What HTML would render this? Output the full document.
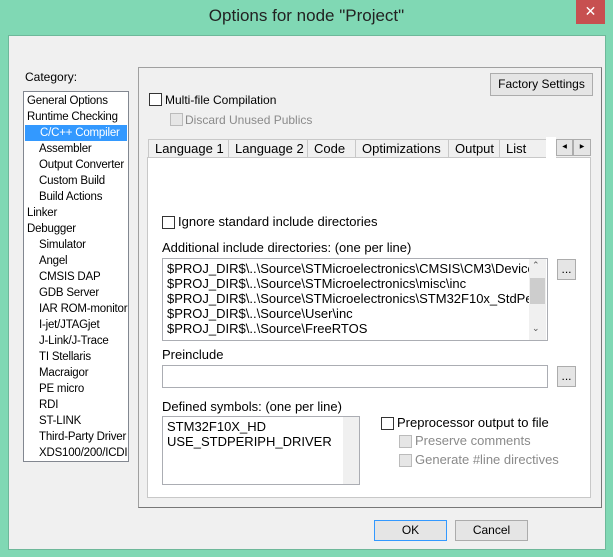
<!DOCTYPE html>
<html><head><meta charset="utf-8"><style>
*{margin:0;padding:0;box-sizing:border-box}
body{width:613px;height:557px;background:#80d8b4;position:relative;overflow:hidden;font-family:"Liberation Sans",sans-serif;font-size:12px;color:#000}
.a{position:absolute;white-space:nowrap}
.cb{position:absolute;width:13px;height:13px;border:1px solid #333;background:#fff}
.cb.d{border-color:#bbb;background:#e6e6e6}
.btn{position:absolute;background:#e5e5e5;border:1px solid #acacac;text-align:center}
.g{color:#8a8a8a}
.li{position:absolute;left:0;width:104px;height:16px;line-height:16px;padding-left:3px;white-space:nowrap;overflow:hidden;font-size:11.5px;letter-spacing:-0.2px}
.s{padding-left:15px}
.box{position:absolute;background:#fff;border:1px solid #abadb3}
.t{font-size:13px}
.tab{position:absolute;top:139px;height:19px;border:1px solid #c8c8c8;background:#f0f0f0;font-size:13px;line-height:18px;padding-left:6px;white-space:nowrap;overflow:hidden}
</style></head><body>
<div class="a" style="left:0;top:6px;width:613px;text-align:center;font-size:17px;color:#222">Options for node "Project"</div>
<div class="a" style="left:576px;top:0;width:29px;height:24px;background:#c75050;color:#fff;text-align:center;font-size:14px;line-height:22px">✕</div>
<div class="a" style="left:8px;top:35px;width:598px;height:515px;background:#f0f0f0;border:1px solid #6eb89a"></div>
<div class="a" style="left:25px;top:70px">Category:</div>
<div class="box" style="left:23px;top:91px;width:106px;height:371px;border-color:#828790;overflow:hidden">
<div style="position:absolute;left:0;top:1px;width:104px">
<div class="li" style="top:0">General Options</div>
<div class="li" style="top:16px">Runtime Checking</div>
<div class="li s" style="top:32px;left:1px;width:102px;background:#3399ff;color:#fff">C/C++ Compiler</div>
<div class="li s" style="top:48px">Assembler</div>
<div class="li s" style="top:64px">Output Converter</div>
<div class="li s" style="top:80px">Custom Build</div>
<div class="li s" style="top:96px">Build Actions</div>
<div class="li" style="top:112px">Linker</div>
<div class="li" style="top:128px">Debugger</div>
<div class="li s" style="top:144px">Simulator</div>
<div class="li s" style="top:160px">Angel</div>
<div class="li s" style="top:176px">CMSIS DAP</div>
<div class="li s" style="top:192px">GDB Server</div>
<div class="li s" style="top:208px">IAR ROM-monitor</div>
<div class="li s" style="top:224px">I-jet/JTAGjet</div>
<div class="li s" style="top:240px">J-Link/J-Trace</div>
<div class="li s" style="top:256px">TI Stellaris</div>
<div class="li s" style="top:272px">Macraigor</div>
<div class="li s" style="top:288px">PE micro</div>
<div class="li s" style="top:304px">RDI</div>
<div class="li s" style="top:320px">ST-LINK</div>
<div class="li s" style="top:336px">Third-Party Driver</div>
<div class="li s" style="top:352px">XDS100/200/ICDI</div>
</div></div>
<div class="a" style="left:138px;top:67px;width:464px;height:441px;border:1px solid #a0a0a0;border-right-color:#777;border-bottom-color:#777"></div>
<div class="btn" style="left:490px;top:73px;width:103px;height:23px;line-height:21px">Factory Settings</div>
<div class="cb" style="left:149px;top:93px"></div><div class="a" style="left:165px;top:93px">Multi-file Compilation</div>
<div class="cb d" style="left:170px;top:113px"></div><div class="a g" style="left:185px;top:113px">Discard Unused Publics</div>
<div class="a" style="left:147px;top:157px;width:444px;height:341px;background:#fff;border:1px solid #c8c8c8"></div>
<div class="tab" style="left:148px;width:81px">Language 1</div>
<div class="tab" style="left:228px;width:80px">Language 2</div>
<div class="tab" style="left:307px;width:49px">Code</div>
<div class="tab" style="left:355px;width:94px">Optimizations</div>
<div class="tab" style="left:448px;width:52px">Output</div>
<div class="tab" style="left:499px;width:48px">List</div>
<div class="a" style="left:546px;top:137px;width:10px;height:21px;background:#fff"></div>
<div class="btn" style="left:556px;top:139px;width:17px;height:17px;font-size:6px;line-height:15px">◀</div>
<div class="btn" style="left:573px;top:139px;width:18px;height:17px;font-size:6px;line-height:15px">▶</div>
<div class="cb" style="left:162px;top:216px"></div><div class="a t" style="left:178px;top:214px;width:204px;overflow:hidden">Ignore standard include directories</div>
<div class="a t" style="left:162px;top:240px">Additional include directories: (one per line)</div>
<div class="box" style="left:162px;top:258px;width:386px;height:83px;overflow:hidden">
<div class="a t" style="left:4px;top:2px;line-height:15px;width:362px;overflow:hidden">$PROJ_DIR$\..\Source\STMicroelectronics\CMSIS\CM3\DeviceSupport<br>$PROJ_DIR$\..\Source\STMicroelectronics\misc\inc<br>$PROJ_DIR$\..\Source\STMicroelectronics\STM32F10x_StdPeriph<br>$PROJ_DIR$\..\Source\User\inc<br>$PROJ_DIR$\..\Source\FreeRTOS</div>
<div class="a" style="left:366px;top:0;width:17px;height:81px;background:#f0f0f0"></div>
<div class="a" style="left:367px;top:19px;width:15px;height:26px;background:#cdcdcd"></div>
<div class="a" style="left:369px;top:1px;font-size:9px;color:#555">⌃</div>
<div class="a" style="left:369px;top:64px;font-size:9px;color:#555">⌄</div>
</div>
<div class="btn" style="left:557px;top:259px;width:19px;height:21px;line-height:19px">...</div>
<div class="a t" style="left:162px;top:347px">Preinclude</div>
<div class="box" style="left:162px;top:365px;width:386px;height:23px"></div>
<div class="btn" style="left:557px;top:366px;width:19px;height:21px;line-height:19px">...</div>
<div class="a t" style="left:162px;top:399px">Defined symbols: (one per line)</div>
<div class="box" style="left:162px;top:416px;width:198px;height:69px">
<div class="a t" style="left:4px;top:2px;line-height:15px">STM32F10X_HD<br>USE_STDPERIPH_DRIVER</div>
<div class="a" style="left:180px;top:0;width:16px;height:67px;background:#f0f0f0"></div>
</div>
<div class="cb" style="left:381px;top:417px"></div><div class="a t" style="left:397px;top:415px">Preprocessor output to file</div>
<div class="cb d" style="left:399px;top:435px"></div><div class="a t g" style="left:415px;top:433px">Preserve comments</div>
<div class="cb d" style="left:399px;top:454px"></div><div class="a t g" style="left:415px;top:452px">Generate #line directives</div>
<div class="btn" style="left:374px;top:520px;width:73px;height:21px;line-height:19px;border-color:#3399ff">OK</div>
<div class="btn" style="left:455px;top:520px;width:73px;height:21px;line-height:19px">Cancel</div>
</body></html>
